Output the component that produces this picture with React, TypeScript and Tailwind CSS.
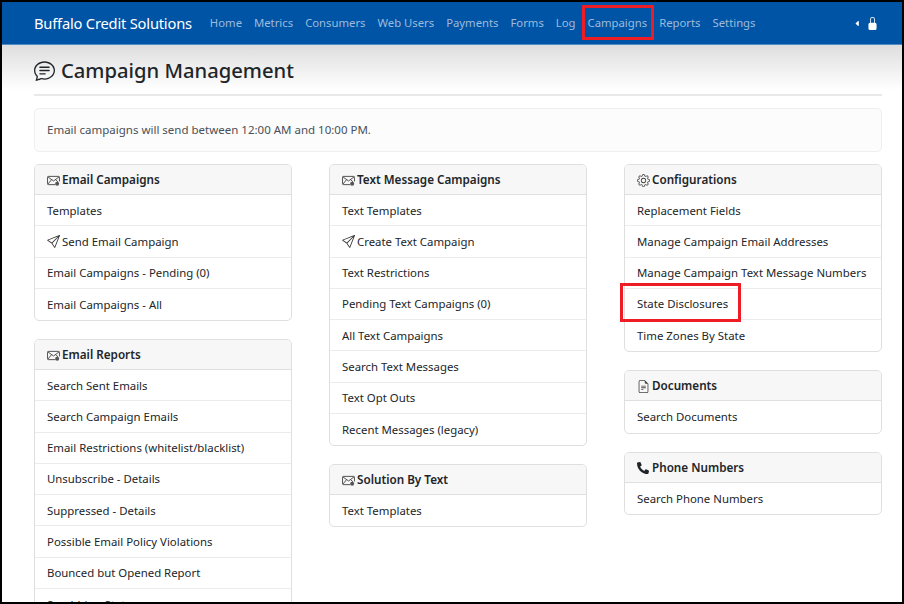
import React from 'react';
import { BsChatText, BsSend, BsGear, BsFileEarmarkText, BsLockFill, BsCaretLeftFill } from 'react-icons/bs';
import { FaPhoneAlt } from 'react-icons/fa';

const navItems = ['Home', 'Metrics', 'Consumers', 'Web Users', 'Payments', 'Forms', 'Log', 'Campaigns', 'Reports', 'Settings'];

type Row = { label: string; send?: boolean };

const Card: React.FC<{ title: string; icon: React.ReactNode; rows: Row[] }> = ({ title, icon, rows }) => (
  <div className="border border-[#dfdfdf] rounded-[5px] bg-white overflow-hidden">
    <div className="h-[30px] flex items-center gap-[1px] px-3 pt-[1px] bg-[#f7f7f7] border-b border-[#dfdfdf] font-semibold text-[11.7px] text-[#212529]">
      <span className="w-[14px] flex justify-start text-[#444]">{icon}</span>
      {title}
    </div>
    {rows.map((row, i) => (
      <div key={row.label} className={`h-[31.25px] flex items-center gap-[2px] px-3 text-[11.4px] text-[#212529] ${i < rows.length - 1 ? 'border-b border-[#ececec]' : ''}`}>
        {row.send && <BsSend className="text-[13px] text-[#333]" />}
        {row.label}
      </div>
    ))}
  </div>
);

const mail = (
  <svg width="13" height="11" viewBox="0 0 14 12" fill="none" stroke="#444" strokeWidth="1">
    <path d="M9 10.5H1.5a1 1 0 0 1-1-1v-7a1 1 0 0 1 1-1h11a1 1 0 0 1 1 1V7" />
    <path d="M.8 2 7 6.5 13.2 2M.8 10 5 5M9 5l3 2.5" />
    <circle cx="11" cy="9.5" r="2.2" fill="#555" stroke="none" />
  </svg>
);

export default function App() {
  return (
    <div className="relative h-[604px] overflow-hidden border-2 border-black bg-white font-['Noto_Sans','Open_Sans',sans-serif] text-[#212529]">
      <nav className="h-[43px] flex items-center pl-8 pr-[23px] bg-[#0054a6] border-b border-[#4f8cc6]">
        <span className="text-[14.7px] text-white mr-[18px] tracking-[-0.2px]">Buffalo Credit Solutions</span>
        <div className="flex gap-3 pt-[1px] text-[11.3px] text-[#9dbbdc]">
          {navItems.map(item => <span key={item}>{item}</span>)}
        </div>
        <div className="ml-auto flex items-center gap-[5px] text-white">
          <BsCaretLeftFill className="text-[7px]" />
          <BsLockFill className="text-[13px]" />
        </div>
      </nav>

      <main className="pl-8 pr-5 bg-gradient-to-b from-[#dedede] via-white via-[45px] to-white">
        <div className="h-[51px] flex items-center gap-[6px] border-b-2 border-[#e9e9e9] pt-[2px]">
          <BsChatText className="text-[21px] text-[#212529]" />
          <h1 className="text-[20.2px] font-medium text-[#212529]">Campaign Management</h1>
        </div>

        <div className="mt-3 h-[44px] flex items-center px-3 rounded-[5px] border border-[#efefef] bg-[#fcfcfc] text-[11.5px] text-[#495057]">
          Email campaigns will send between 12:00 AM and 10:00 PM.
        </div>

        <div className="mt-3 grid grid-cols-3 gap-x-[37px]">
          <div className="flex flex-col gap-[18px]">
            <Card title="Email Campaigns" icon={mail} rows={[
              { label: 'Templates' },
              { label: 'Send Email Campaign', send: true },
              { label: 'Email Campaigns - Pending (0)' },
              { label: 'Email Campaigns - All' },
            ]} />
            <Card title="Email Reports" icon={mail} rows={[
              { label: 'Search Sent Emails' },
              { label: 'Search Campaign Emails' },
              { label: 'Email Restrictions (whitelist/blacklist)' },
              { label: 'Unsubscribe - Details' },
              { label: 'Suppressed - Details' },
              { label: 'Possible Email Policy Violations' },
              { label: 'Bounced but Opened Report' },
              { label: 'Scrubbing Stats' },
            ]} />
          </div>
          <div className="flex flex-col gap-[18px]">
            <Card title="Text Message Campaigns" icon={mail} rows={[
              { label: 'Text Templates' },
              { label: 'Create Text Campaign', send: true },
              { label: 'Text Restrictions' },
              { label: 'Pending Text Campaigns (0)' },
              { label: 'All Text Campaigns' },
              { label: 'Search Text Messages' },
              { label: 'Text Opt Outs' },
              { label: 'Recent Messages (legacy)' },
            ]} />
            <Card title="Solution By Text" icon={mail} rows={[{ label: 'Text Templates' }]} />
          </div>
          <div className="flex flex-col gap-[18px]">
            <Card title="Configurations" icon={<BsGear className="text-[13px]" />} rows={[
              { label: 'Replacement Fields' },
              { label: 'Manage Campaign Email Addresses' },
              { label: 'Manage Campaign Text Message Numbers' },
              { label: 'State Disclosures' },
              { label: 'Time Zones By State' },
            ]} />
            <Card title="Documents" icon={<BsFileEarmarkText className="text-[13px]" />} rows={[{ label: 'Search Documents' }]} />
            <Card title="Phone Numbers" icon={<FaPhoneAlt className="text-[12px] text-[#212529]" />} rows={[{ label: 'Search Phone Numbers' }]} />
          </div>
        </div>
      </main>

      <div className="absolute left-[580px] top-[3px] w-[72px] h-[35px] border-[3px] border-[#ee1c25]" />
      <div className="absolute left-[618px] top-[281px] w-[121px] h-[39px] border-[3px] border-[#ee1c25]" />
    </div>
  );
}
